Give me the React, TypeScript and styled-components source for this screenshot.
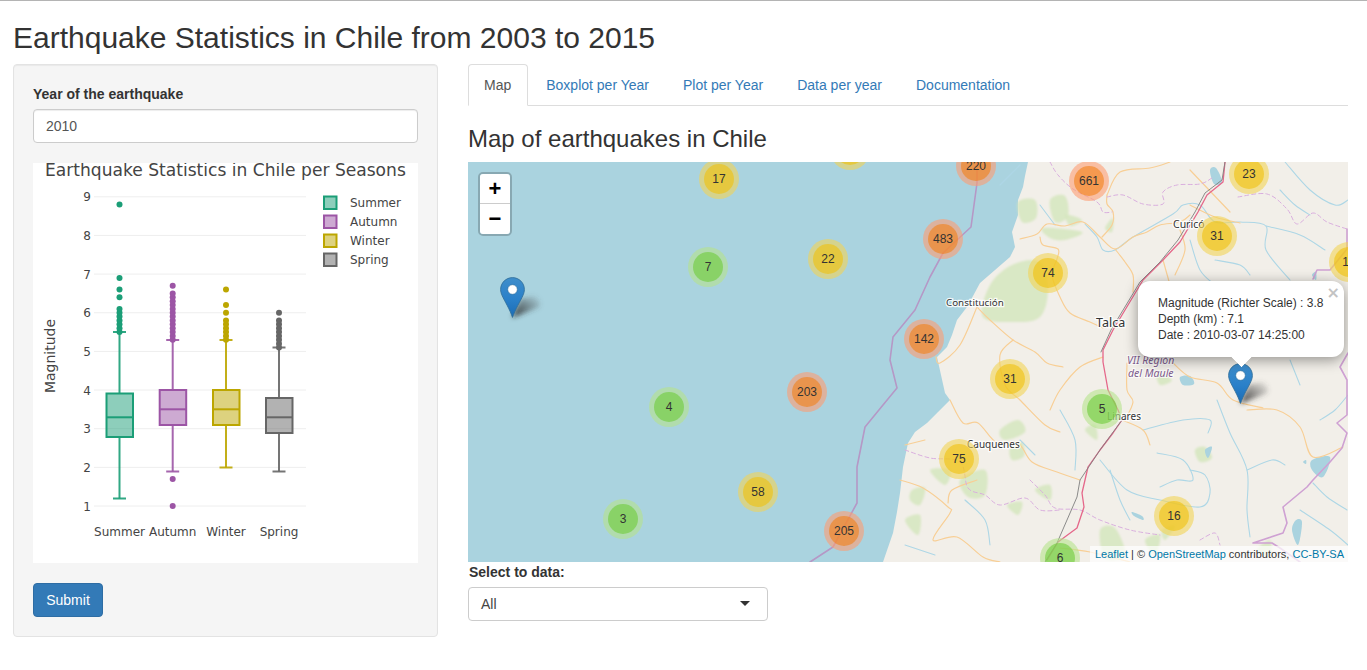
import React from "react";
import styled, { createGlobalStyle } from "styled-components";

const Global = createGlobalStyle`
  html, body { margin: 0; padding: 0; background: #fff; }
  body { font-family: "Liberation Sans", Arial, sans-serif; font-size: 14px; line-height: 20px; color: #333; overflow: hidden; }
  * { box-sizing: border-box; }
`;

const Page = styled.div`
  border-top: 1px solid #b4b4b4;
  padding: 0 19px 0 13px;
  height: 670px;
`;
const Title = styled.h2`
  margin: 20px 0 10px;
  font-size: 30px;
  line-height: 33px;
  font-weight: 500;
`;
const Columns = styled.div`
  display: grid;
  grid-template-columns: 425px 880px;
  column-gap: 30px;
  align-items: start;
`;
const Panel = styled.form`
  background: #f5f5f5;
  border: 1px solid #e3e3e3;
  border-radius: 4px;
  padding: 19px;
  box-shadow: inset 0 1px 1px rgba(0, 0, 0, 0.05);
`;
const FieldLabel = styled.label`
  display: block;
  font-weight: 700;
  margin-bottom: 5px;
`;
const TextInput = styled.div`
  height: 34px;
  border: 1px solid #ccc;
  border-radius: 4px;
  background: #fff;
  padding: 6px 12px;
  color: #555;
  box-shadow: inset 0 1px 1px rgba(0, 0, 0, 0.075);
`;
const ChartFrame = styled.div`
  margin: 20px 0;
  height: 400px;
  background: #fff;
`;
const ChartSvg = styled.svg`
  display: block;
  width: 385px;
  height: 400px;
  font-family: "DejaVu Sans", Verdana, sans-serif;
  font-size: 12px;
  fill: #444;
`;
const SubmitButton = styled.button`
  display: block;
  height: 34px;
  width: 70px;
  padding: 0;
  font: 14px/20px "Liberation Sans", Arial, sans-serif;
  color: #fff;
  background: #337ab7;
  border: 1px solid #2e6da4;
  border-radius: 4px;
`;
const TabBar = styled.ul`
  display: flex;
  gap: 2px;
  margin: 0;
  padding: 0;
  list-style: none;
  height: 42px;
  border-bottom: 1px solid #ddd;
`;
const Tab = styled.li<{ $active?: boolean }>`
  height: 42px;
  padding: 10px ${(p) => (p.$active ? "16px" : "15px")} 10px 15px;
  border: 1px solid ${(p) => (p.$active ? "#ddd" : "transparent")};
  border-bottom-color: ${(p) => (p.$active ? "#fff" : "transparent")};
  border-radius: 4px 4px 0 0;
  background: ${(p) => (p.$active ? "#fff" : "transparent")};
  color: ${(p) => (p.$active ? "#555" : "#337ab7")};
`;
const MapHeading = styled.h3`
  margin: 20px 0 10px;
  font-size: 24px;
  line-height: 26px;
  font-weight: 500;
`;
const MapBox = styled.div`
  position: relative;
  width: 880px;
  height: 400px;
  overflow: hidden;
  background: #aad3df;
`;
const MapArt = styled.svg`
  display: block;
  width: 880px;
  height: 400px;
`;
const PlaceName = styled.text<{ $size?: number }>`
  font-family: "Noto Sans", "DejaVu Sans", sans-serif;
  font-size: ${(p) => p.$size ?? 10}px;
  fill: #333;
  stroke: rgba(255, 255, 255, 0.85);
  stroke-width: 2.5px;
  paint-order: stroke;
`;
const RegionName = styled.text`
  font-family: "Noto Sans", "DejaVu Sans", sans-serif;
  font-size: 10.5px;
  font-style: italic;
  fill: #7d5a8c;
  stroke: rgba(255, 255, 255, 0.7);
  stroke-width: 2px;
  paint-order: stroke;
`;
const tiers = {
  s: ["rgba(181,226,140,.6)", "rgba(110,204,57,.6)"],
  m: ["rgba(241,211,87,.6)", "rgba(240,194,12,.6)"],
  l: ["rgba(253,156,115,.6)", "rgba(241,128,23,.6)"],
};
const Cluster = styled.div<{ $x: number; $y: number; $tier: "s" | "m" | "l" }>`
  position: absolute;
  left: ${(p) => p.$x - 468 - 20}px;
  top: ${(p) => p.$y - 162 - 20}px;
  width: 40px;
  height: 40px;
  border-radius: 50%;
  background: ${(p) => tiers[p.$tier][0]};
  display: flex;
  align-items: center;
  justify-content: center;
`;
const ClusterCore = styled.span<{ $tier: "s" | "m" | "l" }>`
  width: 30px;
  height: 30px;
  border-radius: 50%;
  background: ${(p) => tiers[p.$tier][1]};
  font-size: 12px;
  line-height: 30px;
  text-align: center;
`;
const PinSvg = styled.svg<{ $x: number; $y: number }>`
  position: absolute;
  left: ${(p) => p.$x - 468}px;
  top: ${(p) => p.$y - 162}px;
  width: 50px;
  height: 41px;
  overflow: visible;
`;
const ZoomControl = styled.div`
  position: absolute;
  left: 10px;
  top: 10px;
  border: 2px solid rgba(0, 0, 0, 0.2);
  border-radius: 5px;
  background-clip: padding-box;
`;
const ZoomButton = styled.div<{ $last?: boolean }>`
  width: 30px;
  height: 30px;
  background: #fff;
  color: #000;
  font: 700 22px/30px "Liberation Sans", Arial, sans-serif;
  text-align: center;
  border-bottom: ${(p) => (p.$last ? "none" : "1px solid #ccc")};
  border-radius: ${(p) => (p.$last ? "0 0 3px 3px" : "3px 3px 0 0")};
`;
const Popup = styled.div`
  position: absolute;
  left: 670px;
  top: 119px;
  width: 206px;
  height: 76px;
  background: #fff;
  border-radius: 12px;
  padding: 14px 20px;
  font-size: 12px;
  line-height: 16px;
  color: #333;
  white-space: nowrap;
  box-shadow: 0 3px 14px rgba(0, 0, 0, 0.4);
`;
const PopupTip = styled.div`
  position: absolute;
  left: 94.5px;
  top: 66px;
  width: 17px;
  height: 17px;
  background: #fff;
  transform: rotate(45deg);
  clip-path: polygon(100% 0, 100% 100%, 0 100%);
`;
const PopupClose = styled.span`
  position: absolute;
  right: 4px;
  top: 4px;
  font: 700 16px/16px "DejaVu Sans", Tahoma, sans-serif;
  color: #c3c3c3;
`;
const Attribution = styled.div`
  position: absolute;
  right: 0;
  bottom: 0;
  height: 16px;
  padding: 0 4px 0 5px;
  background: rgba(255, 255, 255, 0.7);
  font-size: 11px;
  line-height: 16px;
  color: #333;
  white-space: nowrap;
`;
const AttrLink = styled.span`
  color: #0078a8;
`;
const SelectLabel = styled.label`
  display: block;
  font-weight: 700;
  margin: 0 0 5px 1px;
`;
const SelectBox = styled.div`
  position: relative;
  width: 300px;
  height: 34px;
  border: 1px solid #ccc;
  border-radius: 4px;
  padding: 6px 12px;
  color: #444;
  background: #fff;
`;
const SelectCaret = styled.span`
  position: absolute;
  right: 17px;
  top: 13px;
  width: 0;
  height: 0;
  border: 5.5px solid transparent;
  border-top: 5.5px solid #333;
  border-bottom: 0;
`;

const yOf = (m: number) => 506 - (m - 1) * 38.65;

const series = [
  { name: "Summer", c: "#1b9e77", x: 119.5, box: [393.5, 437], med: 417.3, lo: 498.5, hi: 332, dots: [8.8, 6.9, 6.6, 6.4], from: 5.5, to: 6.1 },
  { name: "Autumn", c: "#9c55a5", x: 172.7, box: [390, 425], med: 409.3, lo: 471.5, hi: 340, dots: [6.7, 1.7, 1.0], from: 5.3, to: 6.5 },
  { name: "Winter", c: "#bca600", x: 226, box: [390, 425], med: 409.3, lo: 467.5, hi: 340, dots: [6.6, 6.2, 6.0], from: 5.3, to: 5.8 },
  { name: "Spring", c: "#666666", x: 279, box: [398, 433], med: 417.3, lo: 471.5, hi: 347.5, dots: [6.0], from: 5.1, to: 5.8 },
];

function Boxplot() {
  return (
    <ChartSvg viewBox="33 163 385 400">
      <text x="45" y="176" fontSize="17.1">Earthquake Statistics in Chile per Seasons</text>
      {[1, 2, 3, 4, 5, 6, 7, 8, 9].map((m) => (
        <g key={m}>
          <line x1="94" x2="306" y1={yOf(m)} y2={yOf(m)} stroke="#eee" strokeWidth="1" />
          <text x="91" y={yOf(m) + 4.5} textAnchor="end">{m}</text>
        </g>
      ))}
      {series.map((s) => {
        const dense: number[] = [];
        for (let m = s.from; m <= s.to + 0.001; m += 0.1) dense.push(m);
        return (
          <g key={s.name}>
            <line x1={s.x} x2={s.x} y1={s.hi} y2={s.box[0]} stroke={s.c} strokeWidth="2" strokeOpacity="0.9" />
            <line x1={s.x} x2={s.x} y1={s.box[1]} y2={s.lo} stroke={s.c} strokeWidth="2" strokeOpacity="0.9" />
            <line x1={s.x - 6.5} x2={s.x + 6.5} y1={s.hi} y2={s.hi} stroke={s.c} strokeWidth="2" strokeOpacity="0.9" />
            <line x1={s.x - 6.5} x2={s.x + 6.5} y1={s.lo} y2={s.lo} stroke={s.c} strokeWidth="2" strokeOpacity="0.9" />
            <rect x={s.x - 13} y={s.box[0]} width="26.5" height={s.box[1] - s.box[0]} fill={s.c} fillOpacity="0.5" stroke={s.c} strokeWidth="2" />
            <line x1={s.x - 13} x2={s.x + 13.5} y1={s.med} y2={s.med} stroke={s.c} strokeWidth="2" />
            {[...s.dots, ...dense].map((m, i) => (
              <circle key={i} cx={s.x} cy={yOf(m)} r="3" fill={s.c} />
            ))}
          </g>
        );
      })}
      {series.map((s, i) => (
        <g key={s.name}>
          <rect x="324" y={196.5 + i * 19} width="12.5" height="12.5" fill={s.c} fillOpacity="0.5" stroke={s.c} strokeWidth="2" />
          <text x="350" y={206.5 + i * 19}>{s.name}</text>
          <text x={s.x} y="536" textAnchor="middle">{s.name}</text>
        </g>
      ))}
      <text transform="translate(55,356) rotate(-90)" textAnchor="middle" fontSize="14">Magnitude</text>
    </ChartSvg>
  );
}

function Pin({ x, y, id }: { x: number; y: number; id: string }) {
  return (
    <PinSvg $x={x} $y={y} viewBox="0 0 50 41">
      <defs>
        <linearGradient id={`${id}g`} x1="0" y1="0" x2="0" y2="1">
          <stop offset="0" stopColor="#3f8ecb" />
          <stop offset="0.55" stopColor="#2a80c9" />
          <stop offset="1" stopColor="#1c6cb4" />
        </linearGradient>
        <linearGradient id={`${id}s`} x1="0" y1="1" x2="1" y2="0">
          <stop offset="0.2" stopColor="#222" stopOpacity="0.75" />
          <stop offset="1" stopColor="#555" stopOpacity="0.05" />
        </linearGradient>
        <filter id={`${id}b`} x="-50%" y="-50%" width="200%" height="200%">
          <feGaussianBlur stdDeviation="2.6" />
        </filter>
      </defs>
      <path d="M12 41 L20 22 L34 19 Q42 24 39 30 Z" fill={`url(#${id}s)`} filter={`url(#${id}b)`} />
      <path
        d="M12.5 .6C5.9.6.6 5.9.6 12.5c0 2 .6 4.2 1.6 6.3C4.6 24 9.6 32 12.5 40.4 15.4 32 20.4 24 22.8 18.8c1-2.1 1.6-4.3 1.6-6.3C24.4 5.9 19.1.6 12.5.6z"
        fill={`url(#${id}g)`}
        stroke="#2e6c97"
        strokeWidth="0.8"
      />
      <circle cx="12.5" cy="12.5" r="4.8" fill="#fff" stroke="#2a6a99" strokeWidth="0.6" />
    </PinSvg>
  );
}

/* Turns a coordinate list into a smooth Catmull-Rom curve, for the winding roads and rivers. */
function smooth(d: string) {
  const closed = /Z\s*$/i.test(d);
  const nums = d.replace(/[MLZ]/gi, " ").trim().split(/\s+/).map(Number);
  const p: [number, number][] = [];
  for (let i = 0; i + 1 < nums.length; i += 2) p.push([nums[i], nums[i + 1]]);
  const at = (i: number) => (closed ? p[(i + p.length) % p.length] : p[Math.max(0, Math.min(p.length - 1, i))]);
  let out = `M${p[0][0]} ${p[0][1]}`;
  const n = closed ? p.length : p.length - 1;
  for (let i = 0; i < n; i++) {
    const [a, b, c, e] = [at(i - 1), at(i), at(i + 1), at(i + 2)];
    out += `C${b[0] + (c[0] - a[0]) / 6} ${b[1] + (c[1] - a[1]) / 6} ${c[0] - (e[0] - b[0]) / 6} ${c[1] - (e[1] - b[1]) / 6} ${c[0]} ${c[1]}`;
  }
  return closed ? out + "Z" : out;
}

const roads = [
  "M1020 239L1037 234 1047 224 1065 226 1083 222 1100 237 1115 249 1133 237 1147 232 1160 225 1180 222 1190 215",
  "M1107 195L1107 204 1113 212 1112 225 1102 237",
  "M1115 249L1125 262 1133 275 1133 292",
  "M1040 237L1043 245 1058 249 1057 259 1052 275 1060 297 1070 313 1090 322 1103 328",
  "M977 307L990 320 1013 340 1035 352 1047 363 1063 367",
  "M936 357L940 363 960 345 977 307",
  "M1103 357L1080 367 1060 390 1050 410",
  "M1127 363L1127 390 1133 402 1125 420",
  "M950 400L963 423 978 423 997 443 1018 443 1032 462 1057 472 1080 480",
  "M900 480L923 488 948 507 950 513 933 540 957 537 983 557 1000 562",
  "M948 503L952 490 977 480",
  "M1247 410L1277 410 1300 427 1313 457 1343 447",
  "M1173 363L1190 377 1217 383 1233 400 1263 408",
  "M1122 420L1143 430 1150 445",
  "M1190 205L1215 217 1240 223",
  "M1170 162L1150 168 1120 172 1107 195",
  "M1060 548L1090 552 1130 562",
  "M1190 170L1230 212",
  "M1163 260L1170 285",
  "M1180 230L1185 250 1175 275",
  "M1013 340L1000 355 1005 385 1020 400 1045 425 1060 432",
  "M905 445L925 440",
];
const rivers = [
  "M1085 224L1097 237 1103 250 1115 250 1133 237 1173 214 1183 205 1200 205 1215 222 1240 222 1266 226 1266 250 1290 280",
  "M1143 430L1183 420 1210 420 1208 433",
  "M1217 400L1230 433 1247 470 1247 510 1250 537",
  "M1247 470L1272 460 1285 465",
  "M1157 453L1183 460 1193 480 1177 480 1160 487",
  "M1100 460L1127 490 1160 500 1200 507 1210 493 1205 475 1190 470",
  "M1313 483L1327 497 1347 510",
  "M1285 162L1310 190 1335 205 1348 200",
  "M1280 190L1295 205 1310 215",
  "M1266 226L1300 235 1325 250",
  "M1190 240L1200 270 1215 285",
  "M1215 260L1240 265 1250 275",
  "M1000 185L1020 165",
  "M1040 205L1055 225",
  "M1060 410L1075 440 1075 470",
  "M1020 440L1035 455",
  "M965 500L985 520 990 545",
  "M1110 470L1120 500 1130 520",
  "M1290 360L1300 385",
  "M1320 420L1335 410 1348 395",
  "M1300 510L1330 530 1348 545",
  "M1150 362L1170 350",
  "M905 545L935 555",
];
const forests = [
  "M983 317L990 285 1012 265 1040 262 1048 290 1040 317 1015 322Z",
  "M1018 202L1035 200 1036 218 1022 222Z",
  "M1050 200L1065 196 1068 216 1055 222Z",
  "M1066 215L1082 220 1070 226Z",
  "M1043 228L1082 232 1065 240 1050 238Z",
  "M1105 228L1113 218 1112 232Z",
  "M1010 448L1022 442 1024 456 1012 460Z",
  "M1195 450L1205 447 1212 458 1200 462Z",
  "M1100 530L1115 528 1125 555 1105 558Z",
  "M1162 530L1175 526 1165 540Z",
  "M912 490L925 488 920 505 910 500Z",
  "M960 480L985 470 985 495 968 497Z",
  "M1035 490L1050 485 1050 500Z",
  "M1000 430L1018 420 1025 432 1005 440Z",
  "M1085 430L1095 425 1097 440Z",
  "M1145 540L1160 535 1155 555Z",
  "M1157 373L1172 380 1160 385Z",
  "M930 470L950 470 945 485Z",
  "M1257 550L1270 540 1270 556Z",
  "M905 520L920 515 918 535Z",
  "M1007 505L1022 502 1018 515Z",
];
const dashed = [
  "M1050 162L1058 175 1073 189 1097 202 1103 212 1112 212",
  "M1107 197L1123 195 1143 204 1163 204 1163 192 1177 185 1200 184 1212 178",
  "M1238 197L1267 194 1287 209 1297 224 1313 213 1327 222 1347 229",
  "M905 450L930 458 960 462 968 488 985 495 1000 505 1025 498 1040 510 1060 510",
  "M1030 480L1045 495 1055 508 1080 510 1100 520 1130 530 1160 535",
  "M1200 540L1215 533 1220 545",
];
const borders = [
  "M1347 229L1347 249 1330 270 1317 270 1313 279",
  "M1348 353L1340 367 1347 380 1347 415 1337 423 1347 433 1342 448 1330 462 1313 480 1307 487 1283 507 1287 523 1283 533 1253 543 1272 543 1280 548 1300 562",
];
const lakes = [
  "M1312 460L1330 457 1323 477 1312 470Z",
  "M1180 377L1190 376 1194 384 1183 385Z",
  "M1210 170L1216 168 1222 182 1214 184Z",
  "M1296 520L1302 522 1298 545 1292 530Z",
  "M1132 512L1142 516 1143 520 1134 516Z",
  "M1205 450L1212 447 1208 458Z",
  "M1303 462L1306 460 1306 464Z",
  "M1312 275L1316 272 1316 280Z",
];

function MapDrawing() {
  return (
    <MapArt viewBox="468 162 880 400">
      <defs>
        <filter id="soft" x="-10%" y="-10%" width="120%" height="120%">
          <feGaussianBlur stdDeviation="0.9" />
        </filter>
        <filter id="fine" x="-2%" y="-2%" width="104%" height="104%">
          <feGaussianBlur stdDeviation="0.25" />
        </filter>
      </defs>
      <rect x="468" y="162" width="880" height="400" fill="#aad3df" />
      <path
        d="M1028 162L1025 176 1023 187 1018 200 1018 215 1012 232 1015 247 1010 257 995 270 980 283 973 296 967 307 957 320 952 335 947 347 937 357 941 375 945 393 950 400 938 412 927 423 915 432 908 443 903 467 900 493 897 512 893 533 883 562L1348 562 1348 162Z"
        fill="#f2efe9"
      />
      <g filter="url(#soft)">
        {forests.map((d, i) => (
          <path key={i} d={smooth(d)} fill="#d3e6bc" fillOpacity="0.8" />
        ))}
      </g>
      <g filter="url(#fine)">
        {lakes.map((d, i) => (
          <path key={i} d={smooth(d)} fill="#aad3df" />
        ))}
      </g>
      <g fill="none" strokeLinejoin="round" strokeLinecap="round" filter="url(#fine)">
        {rivers.map((d, i) => (
          <path key={i} d={smooth(d)} stroke="#aed7e6" strokeWidth="1.1" />
        ))}
        {roads.map((d, i) => (
          <path key={i} d={smooth(d)} stroke="#f8cf96" strokeWidth="1.2" />
        ))}
        {dashed.map((d, i) => (
          <path key={i} d={smooth(d)} stroke="#d9aede" strokeWidth="1" strokeDasharray="4 3" />
        ))}
        {borders.map((d, i) => (
          <path key={i} d={d} stroke="#cfa1d3" strokeWidth="1.6" />
        ))}
        <path
          d="M977 162L977 183 971 227 943 253 930 277 915 310 893 337 890 360 897 388 883 405 865 427 857 467 857 503 833 547 810 562"
          stroke="#b598c6"
          strokeWidth="1.6"
        />
        <path
          d="M1225 162L1223 182 1207 195 1198 212 1180 242 1163 260 1143 280 1113 330 1103 350 1103 362 1108 390 1118 410 1122 420 1113 433 1100 450 1088 467 1082 493 1084 507 1077 528 1058 542 1047 560"
          stroke="#e5678a"
          strokeWidth="1.3"
        />
        <path
          d="M1225 162L1222 180 1205 193 1195 212 1178 240 1160 262 1140 282 1111 330 1101 352 M1122 420L1100 450 1080 480 1077 497 1057 543 1045 562"
          stroke="#7f7f7f"
          strokeWidth="0.9"
        />
      </g>
      <PlaceName x="946" y="306" $size={9.8}>Constitución</PlaceName>
      <PlaceName x="1173" y="228" $size={10.5}>Curicó</PlaceName>
      <PlaceName x="1096" y="327" $size={12.5}>Talca</PlaceName>
      <PlaceName x="1107" y="420" $size={10}>Linares</PlaceName>
      <PlaceName x="967" y="448" $size={10}>Cauquenes</PlaceName>
      <RegionName x="1127" y="364">VII Región</RegionName>
      <RegionName x="1128" y="377">del Maule</RegionName>
    </MapArt>
  );
}

const clusters: { x: number; y: number; n: string; t: "s" | "m" | "l" }[] = [
  { x: 850, y: 150, n: "", t: "m" },
  { x: 719, y: 179, n: "17", t: "m" },
  { x: 828, y: 259, n: "22", t: "m" },
  { x: 708, y: 267, n: "7", t: "s" },
  { x: 976, y: 166, n: "220", t: "l" },
  { x: 1089, y: 181, n: "661", t: "l" },
  { x: 1249, y: 174, n: "23", t: "m" },
  { x: 943, y: 239, n: "483", t: "l" },
  { x: 1217, y: 236, n: "31", t: "m" },
  { x: 1048, y: 273, n: "74", t: "m" },
  { x: 1349, y: 262, n: "15", t: "m" },
  { x: 924, y: 339, n: "142", t: "l" },
  { x: 1010, y: 379, n: "31", t: "m" },
  { x: 1102, y: 409, n: "5", t: "s" },
  { x: 959, y: 459, n: "75", t: "m" },
  { x: 1174, y: 516, n: "16", t: "m" },
  { x: 1060, y: 558, n: "6", t: "s" },
  { x: 669, y: 407, n: "4", t: "s" },
  { x: 807, y: 392, n: "203", t: "l" },
  { x: 758, y: 492, n: "58", t: "m" },
  { x: 623, y: 519, n: "3", t: "s" },
  { x: 844, y: 531, n: "205", t: "l" },
];

export default function App() {
  return (
    <Page>
      <Global />
      <Title>Earthquake Statistics in Chile from 2003 to 2015</Title>
      <Columns>
        <Panel>
          <FieldLabel>Year of the earthquake</FieldLabel>
          <TextInput>2010</TextInput>
          <ChartFrame>
            <Boxplot />
          </ChartFrame>
          <SubmitButton type="button">Submit</SubmitButton>
        </Panel>
        <main>
          <TabBar>
            <Tab $active>Map</Tab>
            <Tab>Boxplot per Year</Tab>
            <Tab>Plot per Year</Tab>
            <Tab>Data per year</Tab>
            <Tab>Documentation</Tab>
          </TabBar>
          <MapHeading>Map of earthquakes in Chile</MapHeading>
          <MapBox>
            <MapDrawing />
            {clusters.map((c, i) => (
              <Cluster key={i} $x={c.x} $y={c.y} $tier={c.t}>
                <ClusterCore $tier={c.t}>{c.n}</ClusterCore>
              </Cluster>
            ))}
            <Pin x={500} y={277} id="p1" />
            <Pin x={1228} y={363} id="p2" />
            <ZoomControl>
              <ZoomButton>+</ZoomButton>
              <ZoomButton $last>−</ZoomButton>
            </ZoomControl>
            <Popup>
              <PopupClose>×</PopupClose>
              Magnitude (Richter Scale) : 3.8
              <br />
              Depth (km) : 7.1
              <br />
              Date : 2010-03-07 14:25:00
              <PopupTip />
            </Popup>
            <Attribution>
              <AttrLink>Leaflet</AttrLink> | © <AttrLink>OpenStreetMap</AttrLink> contributors, <AttrLink>CC-BY-SA</AttrLink>
            </Attribution>
          </MapBox>
          <SelectLabel>Select to data:</SelectLabel>
          <SelectBox>
            All
            <SelectCaret />
          </SelectBox>
        </main>
      </Columns>
    </Page>
  );
}
